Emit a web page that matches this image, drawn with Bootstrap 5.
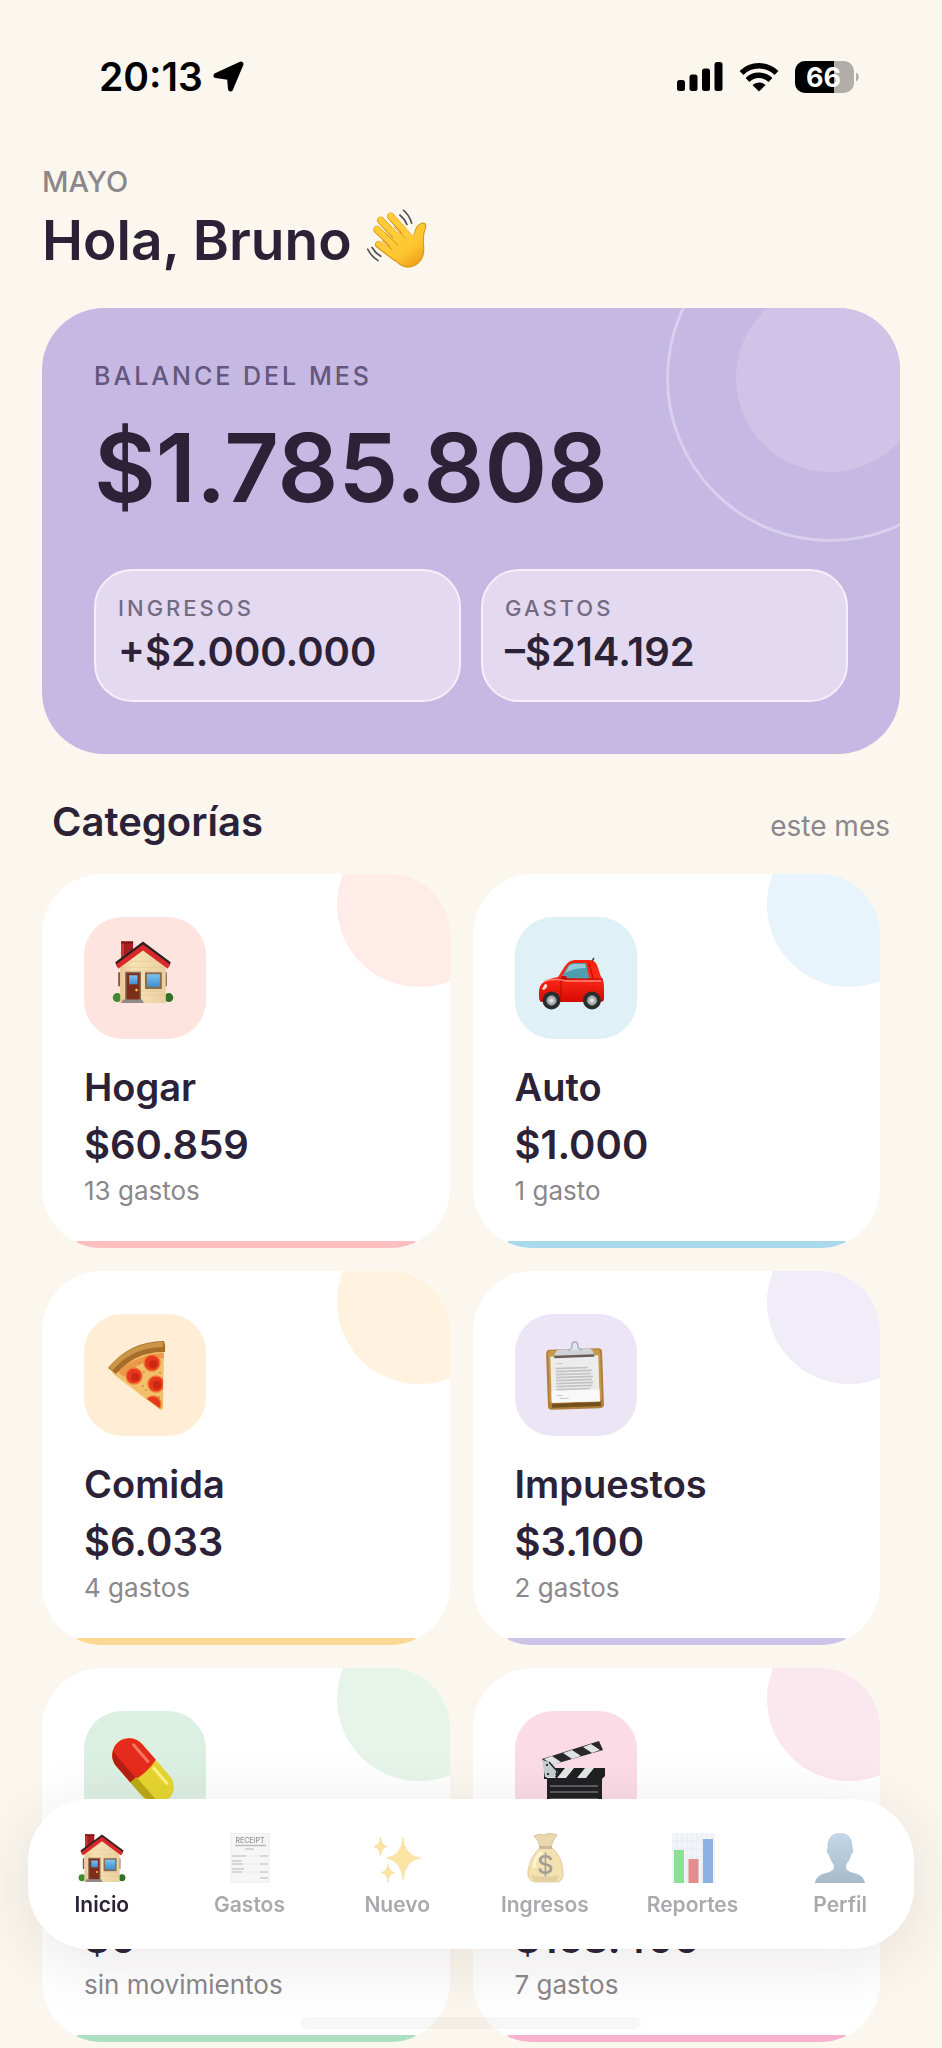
<!DOCTYPE html>
<html lang="es">
<head>
<meta charset="utf-8">
<meta name="viewport" content="width=device-width, initial-scale=1">
<title>Gastos de mayo</title>
<link href="https://cdn.jsdelivr.net/npm/bootstrap@5.3.0/dist/css/bootstrap.min.css" rel="stylesheet">
<style>
  :root { --ink: #2c2237; --muted: #8b878b; --cream: #fbf7ee; --lilac: #c5b8e2; }
  body { background: var(--cream); color: var(--ink); font-family: Inter, "Liberation Sans", sans-serif; font-weight: 600; }
  svg { display: block; flex: none; }
  .status-bar { padding: 53px 81px 0 99px; color: #000; font-size: 39px; line-height: 48px; }
  .screen { padding: 63px 42px 7px; }
  .month-label { color: var(--muted); font-size: 29px; line-height: 36px; font-weight: 500; }
  .greeting { font-size: 55px; line-height: 72px; font-weight: 600; margin: 4px 0 32px; gap: 14px; }
  .balance { background: var(--lilac); border-radius: 62px; padding: 52px; overflow: hidden; }
  .ring, .disc { position: absolute; border-radius: 50%; }
  .ring { width: 328px; height: 328px; top: -94px; right: -94px; border: 3px solid #d9cfee; }
  .disc { width: 188px; height: 188px; top: -24px; right: -24px; background: #cfc3e7; }
  .caps { letter-spacing: 3px; font-weight: 500; }
  .balance-label { font-size: 25px; line-height: 32px; color: #64567c; }
  .balance-total { font-size: 95px; line-height: 112px; margin: 20px 0 45px; }
  .flow-row { gap: 20px; }
  .flow-box { background: #e3daf1; border: 2px solid #f4effa; border-radius: 38px; padding: 23px 22px 24px; }
  .flow-label { font-size: 22px; line-height: 28px; color: #756a83; }
  .flow-value { font-size: 40px; line-height: 48px; margin-top: 6px; }
  .section-head { padding: 0 10px; margin: 44px 0 28px; }
  .section-head h2 { font-size: 40px; line-height: 48px; font-weight: 600; }
  .section-head span { font-size: 28px; line-height: 36px; font-weight: 400; color: var(--muted); }
  .cat-grid { display: grid; grid-template-columns: repeat(2, 47.5%); gap: 23px; }
  .cat { background: #fff; border-radius: 60px; padding: 43px 42px 41px; overflow: hidden; color: var(--ink); }
  .cat::before { content: ""; position: absolute; width: 164px; height: 164px; border-radius: 50%; top: -51px; right: -51px; background: var(--soft); }
  .cat::after { content: ""; position: absolute; height: 7px; left: 33px; right: 33px; bottom: 0; border-radius: 4px; background: var(--line); }
  .tile { width: 122px; height: 122px; border-radius: 38px; background: var(--tile); }
  .cat h3 { font-size: 38px; line-height: 48px; min-height: 48px; font-weight: 600; margin: 24px 0 8px; }
  .cat-sum { font-size: 40px; line-height: 52px; }
  .cat-note { font-size: 26px; line-height: 32px; margin-top: 4px; font-weight: 400; color: var(--muted); }
  .c-rose { --soft: #ffebe8; --tile: #fde4df; --line: #ffbfc1; }
  .c-blue { --soft: #e7f4fb; --tile: #dff0f7; --line: #a9d9ea; }
  .c-gold { --soft: #fff2df; --tile: #ffeed5; --line: #fbd994; }
  .c-lilac { --soft: #f0ecf8; --tile: #ece5f6; --line: #cdc2e8; }
  .c-mint { --soft: #e6f4ea; --tile: #dcefe3; --line: #aedfc1; }
  .c-pink { --soft: #fbe7ee; --tile: #fadbe6; --line: #f7b3cd; }
  .tabs { position: fixed; left: 28px; right: 28px; bottom: 99px; background: #fff; border-radius: 62px; padding: 34px 0 30px; box-shadow: 0 12px 64px rgba(60, 40, 40, .11); z-index: 10; }
  .tabs a { flex: 1 1 0; color: #aaa9ad; font-size: 21px; line-height: 28px; text-decoration: none; }
  .tabs svg { width: 50px; height: 50px; margin-bottom: 8px; opacity: .5; }
  .tabs a.active { color: var(--ink); }
  .tabs a.active svg { opacity: 1; }
  .home-bar { position: fixed; left: 32%; right: 32%; bottom: 19px; height: 12px; border-radius: 6px; background: rgba(60, 60, 70, .04); z-index: 11; }
</style>
</head>
<body>
<svg width="0" height="0" class="position-absolute" aria-hidden="true">
  <defs>
    <linearGradient id="wall" x2="1"><stop stop-color="#e9c893"/><stop offset=".3" stop-color="#f8e2b4"/><stop offset="1" stop-color="#e8cfa0"/></linearGradient>
    <linearGradient id="glass" x2="0" y2="1"><stop stop-color="#7ec2ef"/><stop offset="1" stop-color="#3f8fd0"/></linearGradient>
    <linearGradient id="hand" x2=".6" y2="1"><stop stop-color="#ffd445"/><stop offset=".7" stop-color="#fdc42f"/><stop offset="1" stop-color="#f0a51c"/></linearGradient>
    <linearGradient id="paint" x2="0" y2="1"><stop stop-color="#f8210c"/><stop offset=".4" stop-color="#ff2a18"/><stop offset="1" stop-color="#d50a03"/></linearGradient>
    <linearGradient id="person" x2="0" y2="1"><stop stop-color="#8cb1cf"/><stop offset="1" stop-color="#4f7898"/></linearGradient>
    <symbol id="house" viewBox="29 23.500 62 62.500">
      <circle cx="34" cy="80.500" r="4.500" fill="#3e8a2c"/><circle cx="86" cy="80.500" r="4.500" fill="#2f7424"/>
      <path d="M35 55h2v14h-2zM82 55h2v14h-2z" fill="#7a5a44"/>
      <path d="M38 24h12v20H38z" fill="#a51f22"/><path d="M38 24h3v20h-3z" fill="#c93634"/><path d="M38 24h12v2H38z" fill="#7c1518"/>
      <path d="M37 46L60 28l23 18v40H37z" fill="url(#wall)"/>
      <path d="M38 50h44M38 54h44M38 74h44M38 78h44M45 44h30" stroke="#e3c896" stroke-width=".6"/>
      <path d="M60 24l28 21-2 5-26-19-26 19-2-5z" fill="#2f2120"/>
      <path d="M60 27l27 20-2 4.500-25-18.500-25 18.500-2-4.500z" fill="#d8282b"/>
      <path d="M42 54.500h16V83H42z" fill="#8a6a55"/><path d="M43.500 56h13v27h-13z" fill="#7c2e1b"/><path d="M46 58h8.500v9H46z" fill="url(#glass)"/><circle cx="53.500" cy="73" r="1.400" fill="#f3c434"/>
      <path d="M62 55h17v17H62z" fill="#8a6c52"/><path d="M64 57h13v12.500H64z" fill="url(#glass)"/>
      <path d="M40 82.500h19l2 3.500H38z" fill="#918a88"/>
    </symbol>
  </defs>
</svg>

<div class="status-bar d-flex align-items-center">
  <span>20:13</span>
  <svg class="ms-2" width="34" height="34" viewBox="0 0 34 34" aria-hidden="true"><path d="M30 4L19.500 29 18.500 17.500 5 15.500z" fill="#000" stroke="#000" stroke-width="5" stroke-linejoin="round"/></svg>
  <svg class="ms-auto" width="46" height="30" viewBox="0 0 46 30" aria-hidden="true"><rect y="18" width="8" height="11" rx="2.500"/><rect x="12.500" y="12.500" width="8" height="16.500" rx="2.500"/><rect x="25" y="6.500" width="8" height="22.500" rx="2.500"/><rect x="37.500" width="8" height="29" rx="2.500"/></svg>
  <svg class="ms-3" width="40" height="30" viewBox="0 0 40 30" aria-hidden="true"><g fill="none" stroke="#000" stroke-width="5.500"><path d="M2.500 11a25 25 0 0 1 35 0"/><path d="M8.500 18a16.500 16.500 0 0 1 23 0"/></g><path d="M20 29.500l-6.500-6.500a9.500 9.500 0 0 1 13 0z"/></svg>
  <svg class="ms-3" width="66" height="34" viewBox="0 0 66 34" role="img" aria-label="Batería 66 %"><defs><clipPath id="batt"><rect y="1" width="59" height="32" rx="10"/></clipPath></defs><g clip-path="url(#batt)"><path d="M0 0h59v34H0z" fill="#b1ada8"/><path d="M0 0h39v34H0z"/></g><path d="M61 12.500a5 5 0 0 1 0 9z" fill="#b1ada8"/><text x="28.500" y="26.500" text-anchor="middle" font-family="Inter, sans-serif" font-weight="700" font-size="27" fill="#fff">66</text></svg>
</div>

<main class="screen">
  <div class="month-label">MAYO</div>
  <h1 class="greeting d-flex align-items-center">Hola, Bruno
    <svg width="62" height="62" viewBox="35 25 185 185" role="img" aria-label="saludo">
      <g fill="none" stroke-linecap="round" stroke-linejoin="round">
        <g stroke="#dc930f" stroke-width="22"><path d="M109 47l58 66M79 59l66 70M68 87l66 62M73 131l50 38"/></g>
        <path d="M150 97l18 18q10-10 12-24 5-21 23-26 15 0 11 16-8 21-6 49 5 39-16 57-28 24-57 4-20-15-36-36l24-60z" fill="#dc930f"/>
        <g stroke="#ffcb38" stroke-width="18"><path d="M109 46l60 66M79 58l67 70M68 86l67 62M74 130l50 38"/></g>
        <path d="M148 98l20 20q10-10 14-24 5-21 20-26 13 0 9 13-8 21-6 49 5 37-14 55-26 22-55 3-20-15-36-36l22-56z" fill="url(#hand)"/>
        <path d="M119 78l34 35M92 96l38 36M85 120l28 26" stroke="#e7a11a" stroke-width="3"/>
        <path d="M147 29q17 13 24 38M136 43q14 11 21 28M53 140q10 17 26 26M40 145q12 23 31 34" stroke="#545257" stroke-width="5"/>
      </g>
    </svg>
  </h1>

  <section class="balance position-relative">
    <div class="ring"></div><div class="disc"></div>
    <div class="balance-label caps">BALANCE DEL MES</div>
    <div class="balance-total">$1.785.808</div>
    <div class="flow-row d-flex position-relative">
      <div class="flow-box flex-fill w-50"><div class="flow-label caps">INGRESOS</div><div class="flow-value">+$2.000.000</div></div>
      <div class="flow-box flex-fill w-50"><div class="flow-label caps">GASTOS</div><div class="flow-value">–$214.192</div></div>
    </div>
  </section>

  <div class="section-head d-flex justify-content-between align-items-baseline"><h2 class="mb-0">Categorías</h2><span>este mes</span></div>

  <section class="cat-grid">
    <article class="cat c-rose position-relative">
      <div class="tile"><svg width="122" height="122" viewBox="0 0 122 122" aria-hidden="true"><use href="#house" x="28" y="24" width="62" height="62"/></svg></div>
      <h3>Hogar</h3><div class="cat-sum">$60.859</div><div class="cat-note">13 gastos</div>
    </article>
    <article class="cat c-blue position-relative">
      <div class="tile"><svg width="122" height="122" viewBox="0 0 122 122" aria-hidden="true">
        <path d="M76 46l3-5" stroke="#444" stroke-width="1.500"/>
        <path d="M24 79q-1-11 5-14 6-4 14-5l7-11q4-6 10-6h14q6 0 8 5l4 12q3 3 3 10v12q0 3-4 3H27q-3 0-3-6z" fill="url(#paint)"/>
        <path d="M46 61l7-12q2-3 7-3h11l3 14q0 2-3 2z" fill="#4f9db0"/><path d="M50 56l4-7q2-2 5-2h11l1 4q-12 0-21 5z" fill="#8fcad6"/>
        <path d="M74 46l4 15M46 63v18M44 62h44" stroke="#b90803" fill="none"/><rect x="46" y="59" width="6" height="5" rx="2" fill="#c80b05"/>
        <path d="M27 72l3-5q3 0 2 3l-3 3z" fill="#fbe5df"/><path d="M30 64q10-3 22 0h34" stroke="#ff8578" stroke-width="1.500" fill="none"/>
        <g fill="#292b2d"><circle cx="36.500" cy="83.500" r="9"/><circle cx="77" cy="83.500" r="9"/></g><g fill="#aeb1b3" stroke="#616568"><circle cx="36.500" cy="83.500" r="5"/><circle cx="77" cy="83.500" r="5"/></g><g fill="#e5e5e5"><circle cx="36.500" cy="83.500" r="2"/><circle cx="77" cy="83.500" r="2"/></g>
      </svg></div>
      <h3>Auto</h3><div class="cat-sum">$1.000</div><div class="cat-note">1 gasto</div>
    </article>
    <article class="cat c-gold position-relative">
      <div class="tile"><svg width="122" height="122" viewBox="0 0 122 122" aria-hidden="true">
        <defs><clipPath id="slice"><path d="M28 59Q50 36 80 34L78 96z"/></clipPath></defs>
        <path d="M28 59Q50 36 80 34L79 94q-1 3-4 1z" fill="#f2c06c"/>
        <g clip-path="url(#slice)"><path d="M34 57Q54 40 80 39v5Q57 45 39 63z" fill="#ea9a46"/><g fill="#e4371b" stroke="#ee7a35" stroke-width="1.500"><circle cx="50" cy="62" r="8"/><circle cx="68" cy="49" r="8"/><circle cx="72" cy="70" r="8"/><circle cx="69" cy="90" r="8"/></g><g fill="#cb2813"><circle cx="51" cy="63" r="4"/><circle cx="69" cy="50" r="4"/><circle cx="73" cy="71" r="4"/></g><g fill="#b96a25"><circle cx="60" cy="58" r=".8"/><circle cx="59" cy="72" r=".8"/><circle cx="62" cy="76" r=".8"/><circle cx="76" cy="59" r=".8"/><circle cx="56" cy="49" r=".8"/><circle cx="75" cy="83" r=".8"/></g></g>
        <path d="M24 54Q46 27 80 27q2 5 1 11Q52 37 32 60z" fill="#a56c2c"/><path d="M25 53Q47 28 79 28v5Q48 33 28 57z" fill="#c99648"/>
      </svg></div>
      <h3>Comida</h3><div class="cat-sum">$6.033</div><div class="cat-note">4 gastos</div>
    </article>
    <article class="cat c-lilac position-relative">
      <div class="tile"><svg width="122" height="122" viewBox="0 0 122 122" aria-hidden="true">
        <g transform="rotate(-2 60 64)"><rect x="32" y="35" width="56" height="60" rx="4" fill="#b07f3a"/><rect x="34" y="36" width="52" height="52" rx="3" fill="#c8984d"/><path d="M36 89h49v4H36z" fill="#75501f"/><path d="M36 42h48v46H36z" fill="#ececec"/><path d="M36 76h48v12H36z" fill="#f8f8f8"/>
        <path d="M41 54h32M41 57h36M41 60h35M41 63h37M41 66h36M41 69h37M41 72h36M41 75h34" stroke="#c2c2c2" stroke-width="1.600"/><path d="M41 49h7M41 81h6M44 84h9" stroke="#c8c8c8"/>
        <path d="M40 42q1-7 6-7h28q5 0 6 7z" fill="#cfd2d6"/><path d="M40 41h40v2.500H40z" fill="#685d58"/><path d="M54 36q5-1 4-5a3 3 0 0 1 6 0q-1 4 4 5" fill="#e3e6ea" stroke="#a3b2c3" stroke-width="1.400"/></g>
      </svg></div>
      <h3>Impuestos</h3><div class="cat-sum">$3.100</div><div class="cat-note">2 gastos</div>
    </article>
    <article class="cat c-mint position-relative">
      <div class="tile"><svg width="122" height="122" viewBox="0 0 122 122" aria-hidden="true">
        <g transform="rotate(49 59 60)"><rect x="21" y="43" width="76" height="34" rx="17" fill="#e5d530"/><path d="M59 43H38a17 17 0 0 0 0 34h21q5-17 0-34z" fill="#e52b1c"/><path d="M59 69h30q-5 8-14 8H59z" fill="#bba914"/><path d="M34 70h25v7H38q-9 0-14-8z" fill="#b51e15"/><path d="M33 50h22" stroke="#fa7460" stroke-width="3" stroke-linecap="round"/><path d="M64 50h20" stroke="#fff285" stroke-width="3" stroke-linecap="round"/></g>
      </svg></div>
      <h3></h3><div class="cat-sum">$0</div><div class="cat-note">sin movimientos</div>
    </article>
    <article class="cat c-pink position-relative">
      <div class="tile"><svg width="122" height="122" viewBox="0 0 122 122" aria-hidden="true">
        <path d="M32 63h55v33H32z" fill="#202022"/><path d="M35 75h48M35 81h48M35 88h48" stroke="#999"/>
        <path d="M29 57h61v8l-3 3H29z" fill="#202022"/><path d="M42 67l8-10h9l-8 10zM62 67l8-10h9l-8 10zM31 67l6-6 4 6z" fill="#e4e6e6"/>
        <path d="M27 48l57-18 4 9-55 16z" fill="#29292b"/><path d="M29 48l8-3 9 6-8 3zM48 42l9-3 9 6-9 3zM68 36l8-3 9 6-8 3z" fill="#dfe3e3"/>
        <path d="M27 49l8 2 8 10-3 5H30z" fill="#c6cdcf"/><path d="M34 51l8 9-1 4" stroke="#27282a" stroke-width="1.500" fill="none"/><circle cx="32" cy="54" r="1"/><circle cx="33" cy="63" r="1"/>
      </svg></div>
      <h3></h3><div class="cat-sum">$168.400</div><div class="cat-note">7 gastos</div>
    </article>
  </section>
</main>

<nav class="tabs d-flex" aria-label="Principal">
  <a href="#inicio" class="active d-flex flex-column align-items-center" aria-current="page"><svg viewBox="0 0 50 50" aria-hidden="true"><use href="#house" x="1" y="1" width="48" height="48"/></svg>Inicio</a>
  <a href="#gastos" class="d-flex flex-column align-items-center"><svg viewBox="0 0 50 50" aria-hidden="true">
    <path d="M6 0h38v50H6z" fill="#eeeeef" stroke="#d6d6d8"/><path d="M10 12.500h31" stroke="#777" stroke-width="1.500"/><path d="M20 16h9M7 23h14M35 23h8M7 28h10M7 31h11M35 31h8M7 36h12M7 39h10M35 39h8M35 45h8" stroke="#999" stroke-width="1.400"/><path d="M21 23h14M18 31h17M17 39h18" stroke="#ccc" stroke-width=".6"/><text x="25" y="10" font-size="7" font-weight="500" text-anchor="middle" fill="#222">RECEIPT</text></svg>Gastos</a>
  <a href="#nuevo" class="d-flex flex-column align-items-center"><svg viewBox="0 0 50 50" aria-hidden="true"><g fill="#f8cb45" stroke="#edb33a" stroke-width=".6"><path d="M31 4q1 19 18 21-16 2-18 22-2-20-17-22 16-2 17-21zM8.500 4q.5 8 6.500 9.500-6 1.500-6.500 9.500Q8 15 2 13.500 8 12 8.500 4zM16 31q.5 7 6.500 8.500Q16.500 41 16 49q-.5-8-6.500-9.500Q15.500 38 16 31z"/></g></svg>Nuevo</a>
  <a href="#ingresos" class="d-flex flex-column align-items-center"><svg viewBox="0 0 50 50" aria-hidden="true"><path d="M14 3q5-3 10-1 5-3 13 0-5 6-6 12H20Q19 8 14 3z" fill="#d6b266" stroke="#ad853e"/><path d="M21 14h10q11 9 12 24 1 10-6 11H15Q7 48 8 38q2-15 13-24z" fill="#e8c662" stroke="#bb9646"/><path d="M11 42q14 4 28 0l-3 6H14z" fill="#c9a143"/><path d="M19 13h13v3H19z" fill="#9d7136"/><path d="M14 35q0-10 8-16" stroke="#fff1a8" stroke-width="3" fill="none"/><text x="25.500" y="41" font-size="26" font-weight="500" text-anchor="middle" fill="#4a4132">$</text></svg>Ingresos</a>
  <a href="#reportes" class="d-flex flex-column align-items-center"><svg viewBox="0 0 50 50" aria-hidden="true"><path d="M4 0h43v50H4z" fill="#e6ebf2"/><path d="M9 0v50M14 0v50M19 0v50M24 0v50M29 0v50M34 0v50M39 0v50M44 0v50M4 8h43M4 16h43M4 24h43M4 32h43M4 40h43" stroke="#cbd6e3" stroke-width=".7"/><path d="M6 17h10v33H6z" fill="#1cc32d"/><path d="M20.500 26h10v24h-10z" fill="#c81e21"/><path d="M35 6h10v44H35z" fill="#1e65c2"/></svg>Reportes</a>
  <a href="#perfil" class="d-flex flex-column align-items-center"><svg viewBox="0 0 50 50" aria-hidden="true"><path d="M25 0c9 0 13 6 12.500 15 1.500 1 .5 6-1.500 7-1 6-5 8-5 12 0 8 17 3 19 16H0C2 37 19 42 19 34c0-4-4-6-5-12-2-1-3-6-1.500-7C12 6 16 0 25 0z" fill="url(#person)"/></svg>Perfil</a>
</nav>
<div class="home-bar"></div>
<script src="https://cdn.jsdelivr.net/npm/bootstrap@5.3.0/dist/js/bootstrap.bundle.min.js"></script>
</body>
</html>
